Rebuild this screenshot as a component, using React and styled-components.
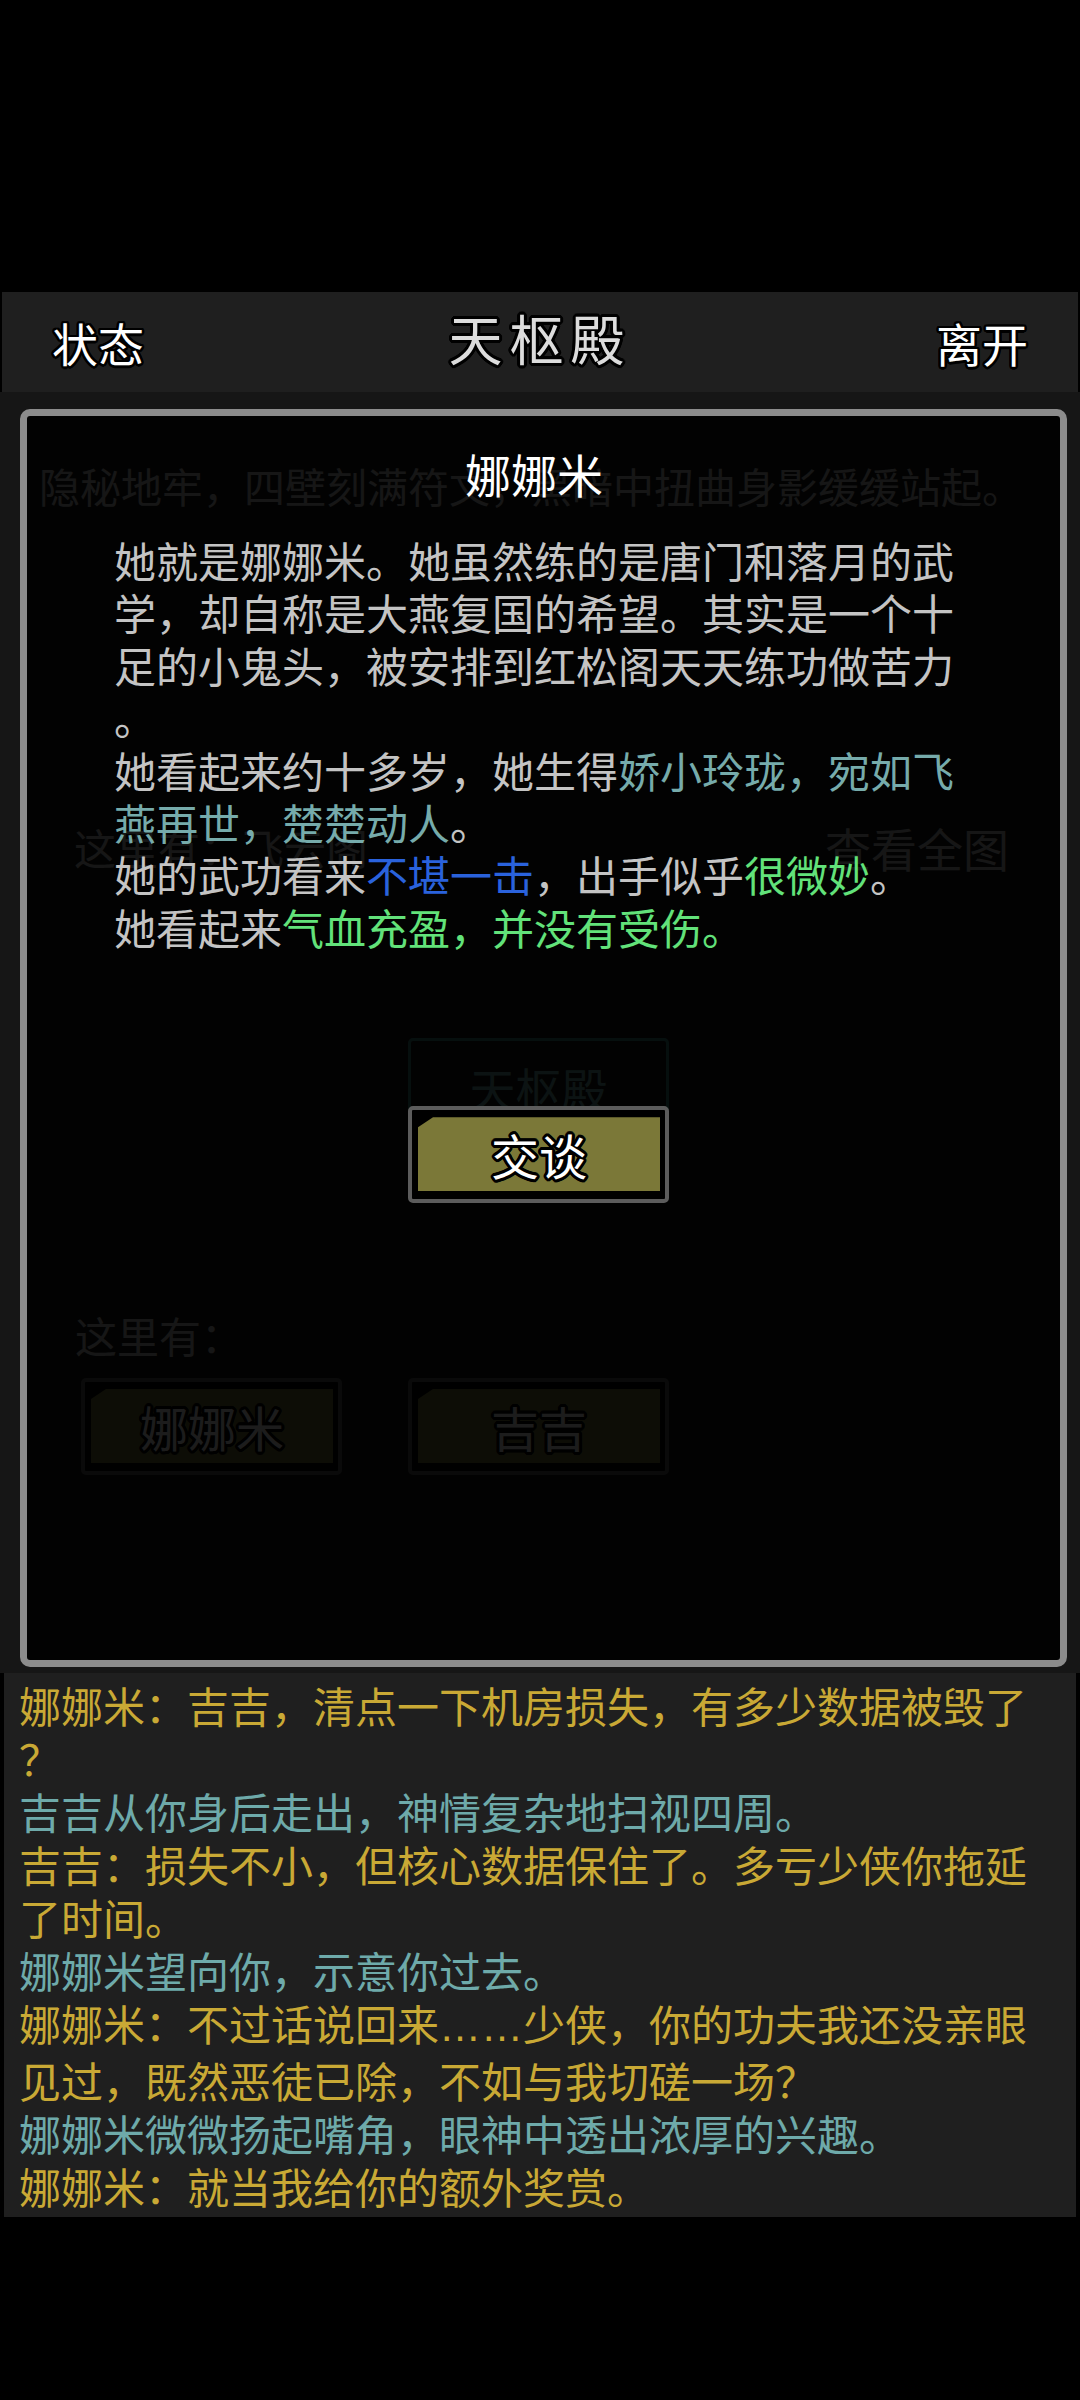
import React from 'react';
import styled, { createGlobalStyle } from 'styled-components';

// text outline used by the game's button / header labels
const outline = (size, color) => {
  const shadows = [];
  for (let i = 0; i < 16; i++) {
    const a = (i / 16) * Math.PI * 2;
    shadows.push(
      `${(Math.cos(a) * size).toFixed(1)}px ${(Math.sin(a) * size).toFixed(1)}px 0 ${color}`
    );
  }
  return shadows.join(', ');
};

const GlobalStyle = createGlobalStyle`
  html, body {
    margin: 0;
    padding: 0;
    background: #000;
  }
  body {
    font-family: "Noto Sans CJK SC", "Noto Sans", sans-serif;
  }
  * {
    box-sizing: border-box;
  }
`;

const StyledScreen = styled.div`
  width: 1080px;
  height: 2400px;
  padding-top: 292px;
  background: #000;
  overflow: hidden;
`;

const StyledHeader = styled.header`
  height: 100px;
  margin: 0 2px;
  padding: 0 50px;
  background: #1f1f1f;
  display: grid;
  grid-template-columns: 1fr auto 1fr;
  align-items: center;
`;

const StyledHeaderButton = styled.span`
  font-size: 46px;
  line-height: 1;
  color: #fff;
  text-shadow: ${outline(2.5, '#000')};
  justify-self: ${({ $side }) => ($side === 'right' ? 'end' : 'start')};
`;

const StyledHeaderTitle = styled.h1`
  margin: 0 0 8px;
  font-size: 54px;
  font-weight: 400;
  letter-spacing: 7px;
  line-height: 1;
  color: #dcdcdc;
  text-shadow: ${outline(3, '#000')};
`;

const StyledScene = styled.section`
  position: relative;
  height: 1281px;
  background: #161616;
`;

const StyledBackPage = styled.div`
  padding: 67px 71px 0 39px;
  display: flex;
  flex-direction: column;
`;

const StyledDesc = styled.p`
  margin: 0;
  font-size: 41px;
  line-height: 52px;
  color: #c8c8c8;
  white-space: nowrap;
`;

const StyledInfoRow = styled.div`
  margin-top: 310px;
  padding-left: 35px;
  display: flex;
  justify-content: space-between;
  align-items: center;
  color: #c8c8c8;
  line-height: 52px;
`;

const StyledInfoText = styled.span`
  font-size: ${({ $size }) => $size}px;
`;

const StyledExitRow = styled.div`
  margin-top: ${({ $gap }) => $gap}px;
  padding-left: ${({ $indent }) => $indent}px;
  display: flex;
  gap: 66px;
`;

const StyledExitButton = styled.div`
  width: 261px;
  height: 97px;
  border: 3px solid #3a8a84;
  border-radius: 5px;
  display: flex;
  align-items: center;
  justify-content: center;
  font-size: 46px;
  color: #70b0a8;
`;

const StyledLabel = styled.div`
  margin-top: 174px;
  padding-left: 36px;
  font-size: 42px;
  line-height: 52px;
  color: #c8c8c8;
`;

const StyledGameButton = styled.div`
  width: 261px;
  height: 97px;
  border: 4px solid #5c5c5c;
  border-radius: 5px;
  background: #000;
  padding: 7px 5px 8px 6px;
  display: flex;
`;

const StyledButtonFill = styled.div`
  flex: 1;
  background: #7b7838;
  clip-path: polygon(15px 0, 100% 0, 100% 100%, 0 100%, 0 10px);
  display: flex;
  align-items: center;
  justify-content: center;
  font-size: 48px;
  line-height: 1;
  color: #fff;
  text-shadow: ${outline(3, '#000')};
`;

const StyledModal = styled.div`
  position: absolute;
  top: 17px;
  left: 20px;
  right: 13px;
  bottom: 6px;
  border: 7px solid #8c8c8c;
  border-radius: 10px;
  background: rgba(0, 0, 0, 0.89);
  padding: 27px 0 0 87px;
`;

const StyledModalTitle = styled.h2`
  width: 840px;
  margin: 0;
  font-size: 46px;
  font-weight: 400;
  line-height: 60px;
  text-align: center;
  color: #fff;
`;

const StyledModalBody = styled.div`
  width: 840px;
  margin-top: 31px;
  font-size: 42px;
  line-height: 52.4px;
  color: #c4c4c4;
`;

const StyledLine = styled.div`
  white-space: nowrap;
  color: ${({ $color }) => $color || 'inherit'};
`;

const StyledTone = styled.span`
  color: ${({ $color }) => $color};
`;

// baseline dots, two em wide like the game's font
const StyledEllipsis = styled.span`
  font-family: "Liberation Sans", sans-serif;
`;

const StyledActionRow = styled.div`
  width: 840px;
  margin-top: 153px;
  padding-left: 9px;
  display: flex;
  justify-content: center;
`;

const StyledLog = styled.section`
  margin: 0 4px;
  padding: 5px 15px;
  background: #1f1f1f;
  font-size: 42px;
  line-height: 53px;
`;

const TEAL = '#76abab';
const BLUE = '#2a62dc';
const GREEN = '#62e27a';
const YELLOW = '#c9a935';
const LOG_TEAL = '#6eaaaa';

const logLines = [
  { text: '娜娜米：吉吉，清点一下机房损失，有多少数据被毁了', color: YELLOW },
  { text: '？', color: YELLOW },
  { text: '吉吉从你身后走出，神情复杂地扫视四周。', color: LOG_TEAL },
  { text: '吉吉：损失不小，但核心数据保住了。多亏少侠你拖延', color: YELLOW },
  { text: '了时间。', color: YELLOW },
  { text: '娜娜米望向你，示意你过去。', color: LOG_TEAL },
  { text: '娜娜米：不过话说回来……少侠，你的功夫我还没亲眼', color: YELLOW },
  { text: '见过，既然恶徒已除，不如与我切磋一场？', color: YELLOW },
  { text: '娜娜米微微扬起嘴角，眼神中透出浓厚的兴趣。', color: LOG_TEAL },
  { text: '娜娜米：就当我给你的额外奖赏。', color: YELLOW },
];

const renderLogText = (text) =>
  text.split(/(……)/).map((part, i) =>
    part === '……' ? <StyledEllipsis key={i}>{part}</StyledEllipsis> : part
  );

const App = () => (
  <>
    <GlobalStyle />
    <StyledScreen lang="zh-CN">
      <StyledHeader>
        <StyledHeaderButton>状态</StyledHeaderButton>
        <StyledHeaderTitle>天枢殿</StyledHeaderTitle>
        <StyledHeaderButton $side="right">离开</StyledHeaderButton>
      </StyledHeader>

      <StyledScene>
        <StyledBackPage>
          <StyledDesc>隐秘地牢，四壁刻满符文，黑暗中扭曲身影缓缓站起。</StyledDesc>
          <StyledInfoRow>
            <StyledInfoText $size={42}>这里有：飞云阁</StyledInfoText>
            <StyledInfoText $size={46}>查看全图</StyledInfoText>
          </StyledInfoRow>
          <StyledExitRow $gap={165} $indent={369}>
            <StyledExitButton>天枢殿</StyledExitButton>
          </StyledExitRow>
          <StyledLabel>这里有：</StyledLabel>
          <StyledExitRow $gap={17} $indent={42}>
            <StyledGameButton>
              <StyledButtonFill>娜娜米</StyledButtonFill>
            </StyledGameButton>
            <StyledGameButton>
              <StyledButtonFill>吉吉</StyledButtonFill>
            </StyledGameButton>
          </StyledExitRow>
        </StyledBackPage>

        <StyledModal>
          <StyledModalTitle>娜娜米</StyledModalTitle>
          <StyledModalBody>
            <StyledLine>她就是娜娜米。她虽然练的是唐门和落月的武</StyledLine>
            <StyledLine>学，却自称是大燕复国的希望。其实是一个十</StyledLine>
            <StyledLine>足的小鬼头，被安排到红松阁天天练功做苦力</StyledLine>
            <StyledLine>。</StyledLine>
            <StyledLine>
              她看起来约十多岁，她生得<StyledTone $color={TEAL}>娇小玲珑，宛如飞</StyledTone>
            </StyledLine>
            <StyledLine>
              <StyledTone $color={TEAL}>燕再世，楚楚动人</StyledTone>。
            </StyledLine>
            <StyledLine>
              她的武功看来<StyledTone $color={BLUE}>不堪一击</StyledTone>，出手似乎
              <StyledTone $color={GREEN}>很微妙</StyledTone>。
            </StyledLine>
            <StyledLine>
              她看起来<StyledTone $color={GREEN}>气血充盈，并没有受伤。</StyledTone>
            </StyledLine>
          </StyledModalBody>
          <StyledActionRow>
            <StyledGameButton>
              <StyledButtonFill>交谈</StyledButtonFill>
            </StyledGameButton>
          </StyledActionRow>
        </StyledModal>
      </StyledScene>

      <StyledLog>
        {logLines.map((line, i) => (
          <StyledLine key={i} $color={line.color}>
            {renderLogText(line.text)}
          </StyledLine>
        ))}
      </StyledLog>
    </StyledScreen>
  </>
);

export default App;
